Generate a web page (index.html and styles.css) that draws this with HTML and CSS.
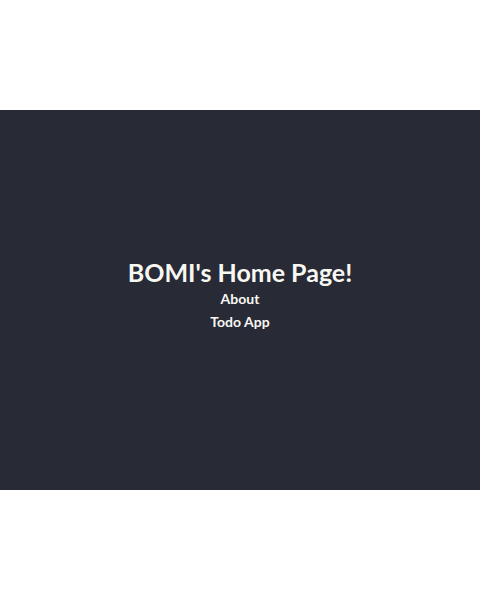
FILE: index.html
```html
<!DOCTYPE html>
<html lang="en">
<head>
<meta charset="utf-8">
<title>BOMI's Home Page!</title>
<link rel="stylesheet" href="styles.css">
</head>
<body>
<main class="hero">
  <h1 class="title">BOMI's Home Page!</h1>
  <nav class="links">
    <a class="link" href="#">About</a>
    <a class="link" href="#">Todo App</a>
  </nav>
</main>
</body>
</html>
```
FILE: styles.css
```css
html, body {
  margin: 0;
  padding: 0;
  background: #ffffff;
}
body {
  height: 600px;
  display: flex;
  align-items: center;
  font-family: "Lato", "Liberation Sans", sans-serif;
}
.hero {
  box-sizing: border-box;
  width: 100%;
  height: 380px;
  padding-bottom: 11px;
  background: #282a36;
  display: flex;
  flex-direction: column;
  align-items: center;
  justify-content: center;
  color: #f8f8f2;
}
.title {
  margin: 0;
  font-size: 25px;
  font-weight: 700;
  line-height: 30px;
}
.links {
  display: flex;
  flex-direction: column;
  align-items: center;
}
.link {
  color: #f8f8f2;
  text-decoration: none;
  font-size: 14px;
  font-weight: 700;
  line-height: 23px;
}
```
